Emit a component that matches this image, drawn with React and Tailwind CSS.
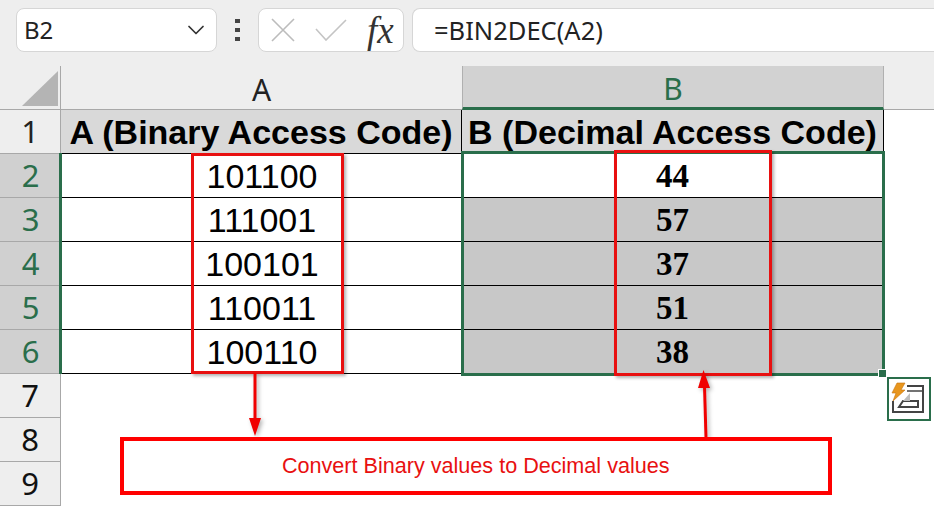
import React from "react";
import { ChevronDown } from "lucide-react";

const rows = [
  { n: 2, bin: "101100", dec: "44" },
  { n: 3, bin: "111001", dec: "57" },
  { n: 4, bin: "100101", dec: "37" },
  { n: 5, bin: "110011", dec: "51" },
  { n: 6, bin: "100110", dec: "38" },
];

function Toolbar() {
  return (
    <div className="flex h-[66px] items-start bg-[#eeeeee] pl-4 pt-2">
      <div className="flex h-[44px] w-[201px] items-center justify-between rounded-lg border border-[#d6d6d6] bg-white pl-[7px] pr-[6px] text-[24px] text-[#222]">
        <span>B2</span>
        <ChevronDown size={28} strokeWidth={1.5} className="text-[#333]" />
      </div>
      <div className="flex h-[44px] w-[41px] flex-col items-center justify-center gap-[5px]">
        <div className="h-[4px] w-[5px] bg-[#444]"></div>
        <div className="h-[4px] w-[5px] bg-[#444]"></div>
        <div className="h-[4px] w-[5px] bg-[#444]"></div>
      </div>
      <div className="flex h-[44px] w-[146px] items-center rounded-lg border border-[#d6d6d6] bg-white pl-[12px]">
        <svg width="24" height="24" viewBox="0 0 24 24" fill="none" stroke="#bcbcbc" strokeWidth="1.6">
          <path d="M1 1 L23 23 M23 1 L1 23" />
        </svg>
        <svg width="32" height="22" viewBox="0 0 32 22" fill="none" stroke="#c4c4c4" strokeWidth="1.6" className="ml-[20px]">
          <path d="M1 10 L11 21 L31 1" />
        </svg>
        <span className="ml-[20px] font-['Liberation_Serif',serif] text-[37px] italic leading-none text-[#333]">fx</span>
      </div>
      <div className="ml-[8px] flex h-[44px] flex-1 items-center rounded-l-lg border-y border-l border-[#d6d6d6] bg-white pl-[21px] text-[25.5px] text-[#222]">
        =BIN2DEC(A2)
      </div>
    </div>
  );
}

function Sheet() {
  return (
    <div className="relative grid grid-cols-[61px_401px_422px_1fr] grid-rows-[repeat(10,44px)] font-['Liberation_Sans',sans-serif]">
      {/* column headers */}
      <div className="relative border-b border-r border-[#a8a8a8] bg-[#eeeeee]">
        <div className="absolute bottom-[3px] right-[2px] h-0 w-0 border-b-[35px] border-l-[36px] border-b-[#b4b4b4] border-l-transparent"></div>
      </div>
      <div className="flex items-center justify-center border-b border-[#a8a8a8] bg-[#eeeeee] pt-[3px] font-['Noto_Sans',sans-serif] text-[30px] text-[#222]">
        A
      </div>
      <div className="flex items-center justify-center border-x border-b-[3px] border-x-[#b0b0b0] border-b-[#2a6e4b] bg-[#d2d2d2] pt-[3px] font-['Noto_Sans',sans-serif] text-[30px] text-[#2a6e4b]">
        B
      </div>
      <div className="border-b border-[#a8a8a8] bg-[#eeeeee]"></div>

      {/* row 1 */}
      <div className="flex items-center justify-center border-b border-r border-[#a8a8a8] bg-[#eeeeee] font-['Noto_Sans',sans-serif] text-[31px] text-[#222]">
        1
      </div>
      <div className="flex items-center justify-center whitespace-nowrap border-b border-r border-black bg-[#d9d9d9] text-[34px] font-bold leading-none text-black">
        A (Binary Access Code)
      </div>
      <div className="flex items-center justify-center whitespace-nowrap border-b border-r border-black bg-[#d9d9d9] text-[34px] font-bold leading-none text-black">
        B (Decimal Access Code)
      </div>
      <div className="bg-white"></div>

      {/* rows 2-6 */}
      {rows.map((r) => (
        <React.Fragment key={r.n}>
          <div className="flex items-center justify-center border-b border-[#a8a8a8] bg-[#d0d0d0] font-['Noto_Sans',sans-serif] text-[31px] text-[#2a6e4b]">
            {r.n}
          </div>
          <div className="flex items-center justify-center border-b border-r border-black bg-white pl-[2px] pt-[1px] text-[34px] leading-none text-black">
            {r.bin}
          </div>
          <div className={r.n === 2 ? "flex items-center justify-center border-b border-r border-black bg-white pt-[2px] font-['Liberation_Serif',serif] text-[33px] font-bold leading-none text-black" : "flex items-center justify-center border-b border-r border-black bg-[#c8c8c8] pt-[2px] font-['Liberation_Serif',serif] text-[33px] font-bold leading-none text-black"}>
            {r.dec}
          </div>
          <div className="bg-white"></div>
        </React.Fragment>
      ))}

      {/* rows 7-9 */}
      {[7, 8, 9].map((n) => (
        <React.Fragment key={n}>
          <div className="flex items-center justify-center border-b border-r border-[#a8a8a8] bg-[#eeeeee] font-['Noto_Sans',sans-serif] text-[31px] text-[#111]">
            {n}
          </div>
          <div className="col-span-3 bg-white"></div>
        </React.Fragment>
      ))}

      {/* selection over B2:B6 */}
      <div className="absolute left-[461px] top-[85px] h-[225px] w-[424px] border-[3px] border-[#2a6e4b]"></div>
      <div className="absolute left-[59px] top-[87px] h-[221px] w-[3px] bg-[#2a6e4b]"></div>
      <div className="absolute left-[878px] top-[303px] h-[9px] w-[9px] border border-white bg-[#2a6e4b]"></div>

      {/* quick analysis button */}
      <div className="absolute left-[887px] top-[311px] flex h-[44px] w-[44px] items-center justify-center border-[2px] border-[#2a6e4b] bg-white">
        <svg width="36" height="36" viewBox="0 0 36 36" fill="none">
          <path d="M16 5 H32 V31 H2 V20" stroke="#444" strokeWidth="2" />
          <path d="M16 10 H32" stroke="#444" strokeWidth="1.5" />
          <path d="M8 26 H27 V20 H12 Z" stroke="#444" strokeWidth="2" />
          <path d="M12 20 L19 12 V20 Z" fill="#bdbdbd" />
          <path d="M6 2 H14 L10 9 H14 L2 20 L5 12 H1 Z" fill="#e8961e" stroke="#c8730c" strokeWidth="0.6" />
        </svg>
      </div>

      {/* red annotation boxes */}
      <div className="absolute left-[190.5px] top-[87px] h-[221px] w-[153px] border-[3px] border-[#e81010] shadow-[2px_2px_3px_rgba(0,0,0,0.3)]"></div>
      <div className="absolute left-[613.5px] top-[84px] h-[226px] w-[158.5px] border-[3px] border-[#e81010] shadow-[2px_2px_3px_rgba(0,0,0,0.3)]"></div>

      {/* arrows */}
      <svg className="absolute left-[240px] top-[306px] drop-shadow-[2px_2px_2px_rgba(0,0,0,0.3)]" width="30" height="66" viewBox="0 0 30 66" fill="none">
        <path d="M15 1 V48" stroke="#f00000" strokeWidth="3" />
        <path d="M9 46 H21 L15 64 Z" fill="#f00000" />
      </svg>
      <svg className="absolute left-[690px] top-[302px] drop-shadow-[2px_2px_2px_rgba(0,0,0,0.3)]" width="30" height="72" viewBox="0 0 30 72" fill="none">
        <path d="M16 70 L14.5 18" stroke="#f00000" strokeWidth="3" />
        <path d="M13.5 2 L20 20 H8 Z" fill="#f00000" />
      </svg>

      {/* callout */}
      <div className="absolute left-[119.5px] top-[371px] flex h-[58px] w-[712.5px] items-center justify-center border-[4px] border-[#ff0000] bg-white text-[21.6px] text-[#e81010]">
        Convert Binary values to Decimal values
      </div>
    </div>
  );
}

export default function App() {
  return (
    <div className="h-[507px] w-[934px] overflow-hidden bg-white font-['Noto_Sans',sans-serif]">
      <Toolbar />
      <Sheet />
    </div>
  );
}
